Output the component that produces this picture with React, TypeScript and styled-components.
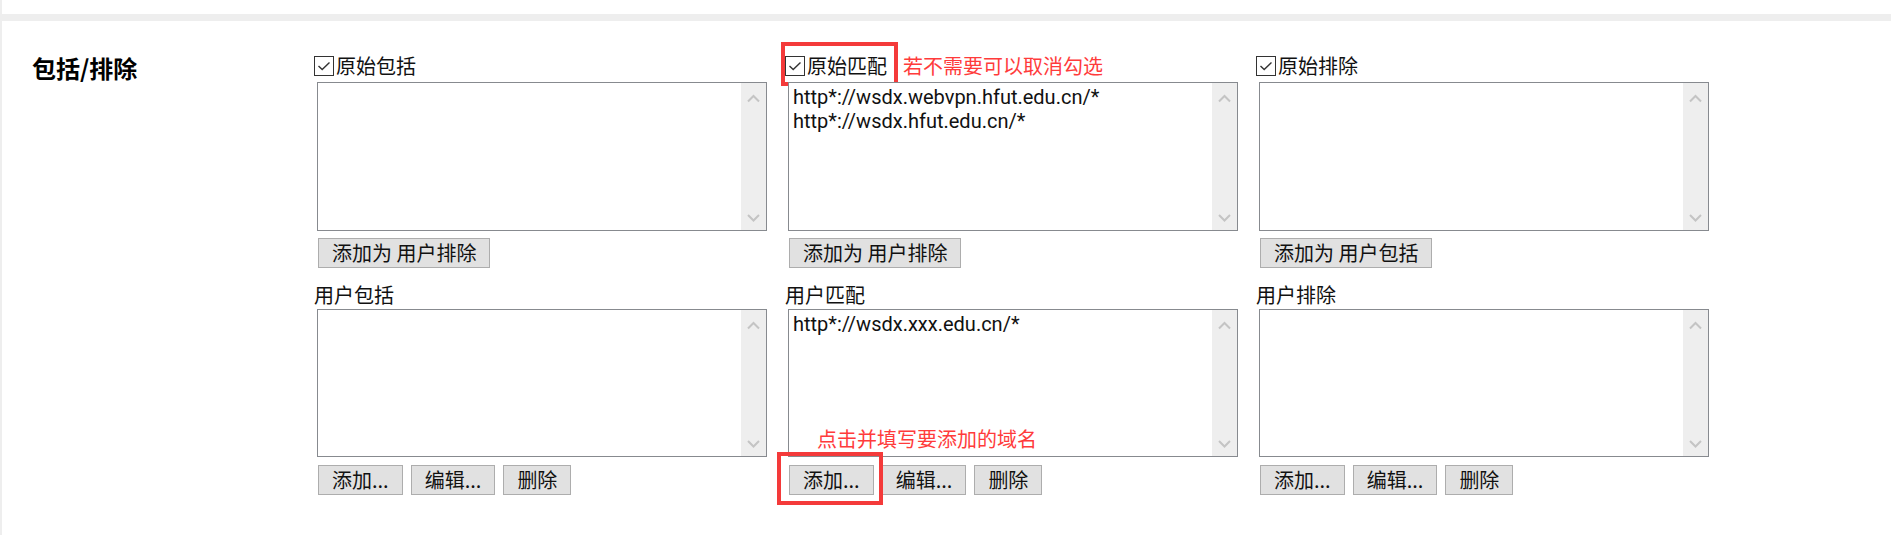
import React from "react";
import styled, { createGlobalStyle } from "styled-components";

const GlobalStyle = createGlobalStyle`
  html, body {
    margin: 0;
    padding: 0;
    background: #eeeeee;
  }
  body {
    font-family: "Noto Sans CJK SC", "Noto Sans", sans-serif;
    color: #111111;
  }
`;

const Page = styled.div`
  display: flex;
  flex-direction: column;
  gap: 7px;
  padding-left: 2px;
  width: 1889px;
  height: 535px;
  overflow: hidden;
`;

const TopCard = styled.div`
  height: 14px;
  background: #ffffff;
`;

const Card = styled.section`
  flex: 1;
  background: #ffffff;
  display: flex;
  padding: 35px 0 0 30px;
`;

const Title = styled.h2`
  margin: 0;
  width: 282px;
  flex: none;
  font-size: 24px;
  line-height: 24px;
  font-weight: 700;
  color: #000000;
`;

const Columns = styled.div`
  display: grid;
  grid-template-columns: repeat(3, 453px);
  column-gap: 18px;
  margin-top: -1px;
`;

const Column = styled.div`
  display: flex;
  flex-direction: column;
`;

const HeaderRow = styled.div<{ $first?: boolean }>`
  position: relative;
  display: flex;
  align-items: center;
  height: 22px;
  margin-top: ${(p) => (p.$first ? "0" : "16px")};
  font-size: 20px;
  line-height: 22px;
  color: #111111;
  white-space: nowrap;
`;

const CheckLabel = styled.label`
  display: flex;
  align-items: center;
  gap: 2px;
`;

const Note = styled.span`
  color: #ff3b3b;
  margin-left: 16px;
`;

const Frame = styled.span<{ $t: number; $l: number; $w: number; $h: number }>`
  position: absolute;
  top: ${(p) => p.$t}px;
  left: ${(p) => p.$l}px;
  width: ${(p) => p.$w}px;
  height: ${(p) => p.$h}px;
  box-sizing: border-box;
  border: 4px solid #f43a3a;
  pointer-events: none;
`;

const ListBox = styled.div<{ $top: number; $h: number }>`
  position: relative;
  display: flex;
  margin: ${(p) => p.$top}px 0 0 3px;
  width: 450px;
  height: ${(p) => p.$h}px;
  box-sizing: border-box;
  border: 1px solid #878a8f;
  background: #ffffff;
`;

const ListContent = styled.div`
  flex: 1;
  padding: 2px 4px;
  font-family: Roboto, "Noto Sans CJK SC", sans-serif;
  font-size: 20px;
  line-height: 24px;
  color: #111111;
`;

const ScrollTrack = styled.div`
  width: 25px;
  flex: none;
  background: #eeeeee;
  display: flex;
  flex-direction: column;
  align-items: center;
  justify-content: space-between;
  padding: 11px 0 8px;
  box-sizing: border-box;
`;

const Overlay = styled.span`
  position: absolute;
  left: 28px;
  top: 118px;
  font-size: 20px;
  line-height: 22px;
  color: #ff3b3b;
  white-space: nowrap;
`;

const ButtonRow = styled.div<{ $top: number }>`
  display: flex;
  gap: 8px;
  margin: ${(p) => p.$top}px 0 0 4px;
`;

const ButtonWrap = styled.span`
  position: relative;
  display: inline-flex;
`;

const Button = styled.button`
  height: 30px;
  box-sizing: border-box;
  padding: 0 13px;
  border: 1px solid #adadad;
  background: #e1e1e1;
  font-family: "Noto Sans CJK SC", sans-serif;
  font-size: 20px;
  line-height: 28px;
  color: #111111;
  white-space: nowrap;
  border-radius: 0;
`;

const Check = () => (
  <svg width="20" height="20" viewBox="0 0 20 20">
    <rect x="0.5" y="0.5" width="19" height="19" fill="#fff" stroke="#333" strokeWidth="1" />
    <path d="M4.5 10 L8.2 13.6 L15.5 6.4" fill="none" stroke="#333" strokeWidth="1.4" />
  </svg>
);

const Chevron = ({ down }: { down?: boolean }) => (
  <svg width="13" height="9" viewBox="0 0 13 9">
    <path
      d={down ? "M1 2 L6.5 7.5 L12 2" : "M1 7.5 L6.5 2 L12 7.5"}
      fill="none"
      stroke="#c4c4c4"
      strokeWidth="2"
    />
  </svg>
);

type Panel = {
  title: string;
  note?: string;
  framed?: boolean;
  items: string[];
  button: string;
  userTitle: string;
  userItems: string[];
  userNote?: string;
  addFramed?: boolean;
};

const panels: Panel[] = [
  {
    title: "原始包括",
    items: [],
    button: "添加为 用户排除",
    userTitle: "用户包括",
    userItems: [],
  },
  {
    title: "原始匹配",
    note: "若不需要可以取消勾选",
    framed: true,
    items: ["http*://wsdx.webvpn.hfut.edu.cn/*", "http*://wsdx.hfut.edu.cn/*"],
    button: "添加为 用户排除",
    userTitle: "用户匹配",
    userItems: ["http*://wsdx.xxx.edu.cn/*"],
    userNote: "点击并填写要添加的域名",
    addFramed: true,
  },
  {
    title: "原始排除",
    items: [],
    button: "添加为 用户包括",
    userTitle: "用户排除",
    userItems: [],
  },
];

const Box = ({ items, top, h, note }: { items: string[]; top: number; h: number; note?: string }) => (
  <ListBox $top={top} $h={h}>
    <ListContent>
      {items.map((t) => (
        <div key={t}>{t}</div>
      ))}
    </ListContent>
    <ScrollTrack>
      <Chevron />
      <Chevron down />
    </ScrollTrack>
    {note && <Overlay>{note}</Overlay>}
  </ListBox>
);

export default function App() {
  return (
    <>
      <GlobalStyle />
      <Page>
        <TopCard />
        <Card>
          <Title>包括/排除</Title>
          <Columns>
            {panels.map((p) => (
              <Column key={p.title}>
                <HeaderRow $first>
                  <CheckLabel>
                    <Check />
                    {p.title}
                  </CheckLabel>
                  {p.note && <Note>{p.note}</Note>}
                  {p.framed && <Frame $t={-13} $l={-4} $w={117} $h={44} />}
                </HeaderRow>
                <Box items={p.items} top={5} h={149} />
                <ButtonRow $top={7}>
                  <Button>{p.button}</Button>
                </ButtonRow>
                <HeaderRow>{p.userTitle}</HeaderRow>
                <Box items={p.userItems} top={3} h={148} note={p.userNote} />
                <ButtonRow $top={8}>
                  <ButtonWrap>
                    <Button>添加...</Button>
                    {p.addFramed && <Frame $t={-13} $l={-12} $w={106} $h={53} />}
                  </ButtonWrap>
                  <Button>编辑...</Button>
                  <Button>删除</Button>
                </ButtonRow>
              </Column>
            ))}
          </Columns>
        </Card>
      </Page>
    </>
  );
}
